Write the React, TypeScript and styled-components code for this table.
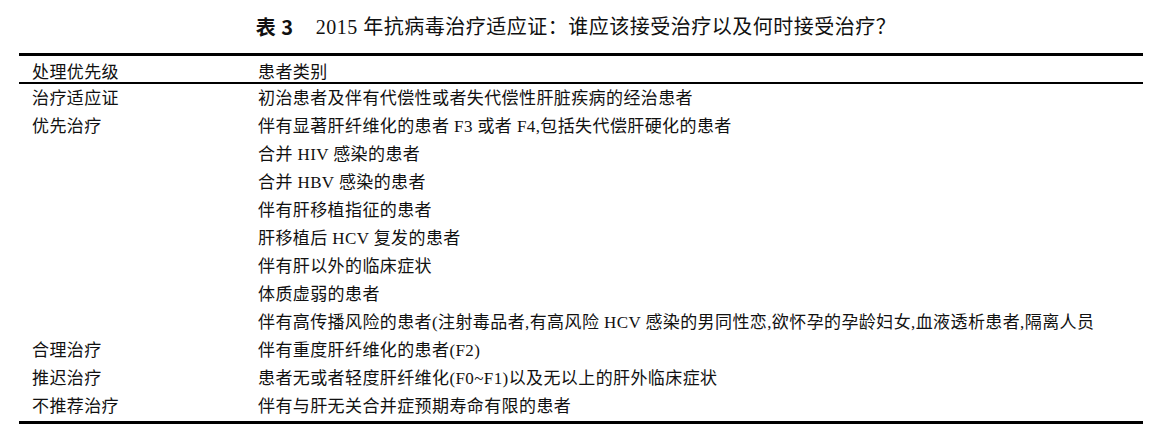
import React from 'react';
import styled, { createGlobalStyle } from 'styled-components';

const GlobalStyle = createGlobalStyle`
  html, body {
    margin: 0;
    padding: 0;
    background: #fff;
  }
  body {
    font-family: "Liberation Serif", "Noto Sans CJK SC", serif;
    color: #111;
  }
`;

const Page = styled.div`
  width: 1124px;
  padding-left: 19px;
`;

const Caption = styled.div`
  height: 53px;
  display: flex;
  align-items: center;
  justify-content: center;
  padding-right: 10px;
  font-size: 20px;
  letter-spacing: 0.5px;
  line-height: 20px;
  white-space: pre;
`;

const Label = styled.span`
  font-family: "Noto Sans CJK SC", sans-serif;
  font-weight: 700;
  margin-right: 22px;
`;

const Table = styled.div`
  border-top: 3px solid #000;
  border-bottom: 3px solid #000;
`;

const Row = styled.div<{ $head?: boolean }>`
  display: grid;
  grid-template-columns: 226px 1fr;
  height: 28px;
  padding-left: 13px;
  font-size: 17px;
  letter-spacing: 0.4px;
  line-height: ${(p) => (p.$head ? '20px' : '28px')};
  padding-top: ${(p) => (p.$head ? '7px' : '0')};
  box-sizing: border-box;
  border-bottom: ${(p) => (p.$head ? '2px solid #000' : 'none')};
  white-space: nowrap;
`;

const Body = styled.div`
  padding-top: 1px;
`;

const Cell = styled.span``;

const rows: [string, string][] = [
  ['治疗适应证', '初治患者及伴有代偿性或者失代偿性肝脏疾病的经治患者'],
  ['优先治疗', '伴有显著肝纤维化的患者 F3 或者 F4,包括失代偿肝硬化的患者'],
  ['', '合并 HIV 感染的患者'],
  ['', '合并 HBV 感染的患者'],
  ['', '伴有肝移植指征的患者'],
  ['', '肝移植后 HCV 复发的患者'],
  ['', '伴有肝以外的临床症状'],
  ['', '体质虚弱的患者'],
  ['', '伴有高传播风险的患者(注射毒品者,有高风险 HCV 感染的男同性恋,欲怀孕的孕龄妇女,血液透析患者,隔离人员'],
  ['合理治疗', '伴有重度肝纤维化的患者(F2)'],
  ['推迟治疗', '患者无或者轻度肝纤维化(F0~F1)以及无以上的肝外临床症状'],
  ['不推荐治疗', '伴有与肝无关合并症预期寿命有限的患者'],
];

const App = () => (
  <>
    <GlobalStyle />
    <Page>
      <Caption>
        <Label>表 3</Label>
        2015 年抗病毒治疗适应证：谁应该接受治疗以及何时接受治疗？
      </Caption>
      <Table>
        <Row $head>
          <Cell>处理优先级</Cell>
          <Cell>患者类别</Cell>
        </Row>
        <Body>
          {rows.map(([level, who], i) => (
            <Row key={i}>
              <Cell>{level}</Cell>
              <Cell>{who}</Cell>
            </Row>
          ))}
        </Body>
      </Table>
    </Page>
  </>
);

export default App;
